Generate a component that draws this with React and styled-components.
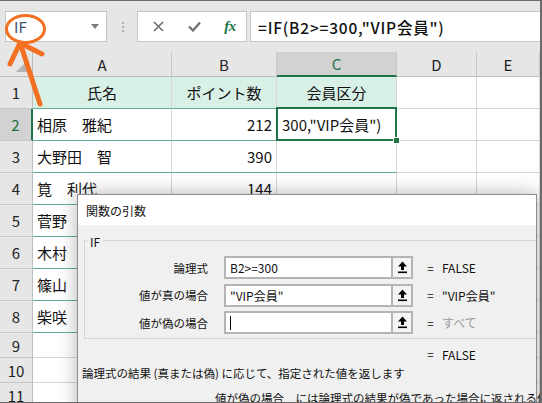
import React from 'react';
import styled, { createGlobalStyle } from 'styled-components';

const FONT = `"Noto Sans CJK JP", "Noto Sans", sans-serif`;
const GREEN = '#217346';
const TABLE_LINE = '#62b08e';
const GRID_LINE = '#d6d6d6';

const GlobalStyle = createGlobalStyle`
  body {
    margin: 0;
    background: #fff;
    font-family: ${FONT};
  }
`;

const Frame = styled.div`
  position: relative;
  width: 542px;
  height: 403px;
  box-sizing: border-box;
  overflow: hidden;
  border-top: 1px solid #6b6b6b;
  border-right: 2px solid #6b6b6b;
  border-bottom: 1px solid #6b6b6b;
  background: #fff;
`;

const Toolbar = styled.div`
  display: flex;
  align-items: center;
  height: 51px;
  padding-left: 5px;
  background: #e6e6e6;
`;

const NameBox = styled.div`
  display: flex;
  align-items: center;
  justify-content: space-between;
  box-sizing: border-box;
  width: 102px;
  height: 31px;
  padding: 0 7px 0 8px;
  background: #fff;
  border: 1px solid #c6c6c6;
  font-size: 15px;
  color: #44546a;
`;

const Caret = styled.span`
  width: 0;
  height: 0;
  border-left: 4px solid transparent;
  border-right: 4px solid transparent;
  border-top: 5px solid #7a7a7a;
`;

const Grip = styled.div`
  display: flex;
  flex-direction: column;
  gap: 2px;
  margin: 0 13px 0 15px;

  span {
    width: 2px;
    height: 2px;
    background: #b0b0b0;
  }
`;

const ButtonBox = styled.div`
  display: flex;
  align-items: center;
  gap: 22px;
  box-sizing: border-box;
  width: 110px;
  height: 31px;
  padding-left: 13px;
  background: #fff;
  border: 1px solid #c6c6c6;
`;

const ToolIcon = styled.span`
  display: flex;
  align-items: center;
  justify-content: center;
  width: 14px;
  height: 14px;
`;

const Fx = styled.span`
  font-family: "Liberation Serif", serif;
  font-style: italic;
  font-weight: bold;
  font-size: 15px;
  color: ${GREEN};
  letter-spacing: -0.5px;
`;

const FormulaBox = styled.div`
  display: flex;
  align-items: center;
  flex: 1;
  box-sizing: border-box;
  height: 31px;
  margin-left: 3px;
  padding-left: 7px;
  background: #fff;
  border: 1px solid #c6c6c6;
  border-right: none;
  font-size: 15.5px;
  font-weight: 500;
  letter-spacing: 0.8px;
  color: #111;
  white-space: nowrap;
`;

const Sheet = styled.div`
  display: grid;
  grid-template-columns: 33px 139px 105px 120px 80px 1fr;
  grid-template-rows: 25px repeat(8, 32px) repeat(3, 25px);
  font-size: 15px;
  color: #111;
`;

const Corner = styled.div`
  display: flex;
  align-items: flex-end;
  justify-content: flex-end;
  padding: 0 4px 4px 0;
  background: #e6e6e6;
  border-right: 1px solid #bdbdbd;
  border-bottom: 1px solid #bdbdbd;

  &::after {
    content: '';
    width: 0;
    height: 0;
    border-left: 12px solid transparent;
    border-bottom: 12px solid #b4b4b4;
  }
`;

const ColHead = styled.div`
  display: flex;
  align-items: center;
  justify-content: center;
  box-sizing: border-box;
  background: ${(p) => (p.$active ? '#d2d2d2' : '#e6e6e6')};
  color: ${(p) => (p.$active ? GREEN : '#222')};
  border-right: 1px solid #c8c8c8;
  border-bottom: ${(p) => (p.$active ? `2px solid ${GREEN}` : '1px solid #bdbdbd')};
`;

const RowHead = styled.div`
  display: flex;
  align-items: center;
  justify-content: center;
  box-sizing: border-box;
  background: ${(p) => (p.$active ? '#d2d2d2' : '#e6e6e6')};
  color: ${(p) => (p.$active ? GREEN : '#222')};
  border-bottom: 1px solid #c8c8c8;
  border-right: ${(p) => (p.$active ? `2px solid ${GREEN}` : '1px solid #bdbdbd')};
`;

const Cell = styled.div`
  position: relative;
  display: flex;
  align-items: center;
  justify-content: ${(p) => p.$align || 'flex-start'};
  box-sizing: border-box;
  padding: 0 4px;
  white-space: nowrap;
  background: ${(p) => (p.$head ? '#d9f0e7' : '#fff')};
  border-right: 1px solid ${GRID_LINE};
  border-bottom: 1px solid ${(p) => (p.$table ? TABLE_LINE : GRID_LINE)};

  ${(p) =>
    p.$selected &&
    `
    z-index: 1;
    padding-left: 5px;
    &::before {
      content: '';
      position: absolute;
      inset: -2px -1px -1px -1px;
      border: 2px solid ${GREEN};
    }
    &::after {
      content: '';
      position: absolute;
      right: -4px;
      bottom: -4px;
      width: 5px;
      height: 5px;
      background: ${GREEN};
      border: 1px solid #fff;
    }
  `}
`;

const Dialog = styled.div`
  position: absolute;
  left: 77px;
  top: 193px;
  width: 460px;
  height: 240px;
  box-sizing: border-box;
  border: 1px solid #8c8c8c;
  background: #f0f0f0;
  box-shadow: 0 0 18px rgba(0, 0, 0, 0.3);
  font-size: 11.5px;
  color: #111;
  z-index: 2;
`;

const TitleBar = styled.div`
  display: flex;
  align-items: center;
  height: 30px;
  padding-left: 8px;
  background: #fff;
  font-size: 12px;
`;

const Body = styled.div`
  padding: 15px 4px 0 4px;
`;

const Group = styled.div`
  position: relative;
  margin: 0 -4px 0 2px;
  padding: 15px 0 4px;
  border: 1px solid #d5d5d5;
  border-right: none;
`;

const Legend = styled.span`
  position: absolute;
  top: -8px;
  left: 2px;
  padding: 0 3px;
  background: #f0f0f0;
  font-size: 12px;
`;

const ArgGrid = styled.div`
  display: grid;
  grid-template-columns: 131px 176px 21px 29px 1fr;
  grid-auto-rows: 23px;
  row-gap: 4.5px;
  align-items: center;
`;

const ArgLabel = styled.span`
  text-align: right;
  padding-right: 8px;
`;

const ArgInput = styled.div`
  display: flex;
  align-items: center;
  box-sizing: border-box;
  height: 23px;
  padding-left: 4px;
  background: #fff;
  border: 2px solid #b4b4b4;
  border-right: 1px solid #b4b4b4;
  margin-left: 8px;
  white-space: nowrap;
  font-size: 12px;
`;

const TextCaret = styled.span`
  display: inline-block;
  width: 1px;
  height: 14px;
  background: #000;
`;

const RefButton = styled.div`
  display: flex;
  align-items: center;
  justify-content: center;
  box-sizing: border-box;
  height: 23px;
  background: #f4f4f4;
  border: 2px solid #b4b4b4;
  border-left: 1px solid #b4b4b4;
`;

const Eq = styled.span`
  text-align: center;
  padding-left: 6px;
`;

const Value = styled.span`
  color: ${(p) => (p.$muted ? '#9a9a9a' : '#111')};
  white-space: nowrap;
  font-size: 12px;
`;

const ResultRow = styled(ArgGrid)`
  margin-top: 7px;
  grid-auto-rows: 16px;
  padding-left: 3px;
`;

const Description = styled.div`
  margin-top: 3px;
  line-height: 16px;
  white-space: nowrap;
`;

const ArgHelp = styled.div`
  margin-top: 9px;
  padding-left: 133px;
  line-height: 16px;
  white-space: nowrap;
`;

const Annotation = styled.svg`
  position: absolute;
  left: 0;
  top: 0;
  z-index: 3;
  overflow: visible;
`;

function CloseIcon() {
  return (
    <svg width="11" height="11" viewBox="0 0 11 11">
      <path d="M1 1 L10 10 M10 1 L1 10" stroke="#6d6d6d" strokeWidth="1.6" />
    </svg>
  );
}

function CheckIcon() {
  return (
    <svg width="13" height="11" viewBox="0 0 13 11">
      <path d="M1 5.5 L5 9.5 L12 1.5" stroke="#6d6d6d" strokeWidth="2.2" fill="none" />
    </svg>
  );
}

function RefIcon() {
  return (
    <svg width="11" height="13" viewBox="0 0 11 13">
      <path d="M5.5 0.5 L10 5.5 H7 V9 H4 V5.5 H1 Z" fill="#000" />
      <rect x="1" y="10.5" width="9" height="1.6" fill="#000" />
    </svg>
  );
}

const COLS = ['A', 'B', 'C', 'D', 'E'];

const ROWS = [
  { n: 1, head: true, table: true, cells: ['氏名', 'ポイント数', '会員区分'] },
  { n: 2, table: true, cells: ['相原　雅紀', '212', '300,"VIP会員")'] },
  { n: 3, table: true, cells: ['大野田　智', '390', ''] },
  { n: 4, table: true, cells: ['筧　利代', '144', ''] },
  { n: 5, table: true, cells: ['菅野', '', ''] },
  { n: 6, table: true, cells: ['木村', '', ''] },
  { n: 7, table: true, cells: ['篠山', '', ''] },
  { n: 8, table: true, cells: ['柴咲', '', ''] },
  { n: 9, cells: [] },
  { n: 10, cells: [] },
  { n: 11, cells: [] },
];

const ARGS = [
  { label: '論理式', input: 'B2>=300', value: 'FALSE' },
  { label: '値が真の場合', input: '"VIP会員"', value: '"VIP会員"' },
  { label: '値が偽の場合', input: null, value: 'すべて', muted: true },
];

function cellAlign(row, col) {
  if (row.head) return 'center';
  if (col === 1) return 'flex-end';
  return 'flex-start';
}

export default function App() {
  return (
    <>
      <GlobalStyle />
      <Frame>
        <Toolbar>
          <NameBox>
            IF
            <Caret />
          </NameBox>
          <Grip>
            <span />
            <span />
            <span />
          </Grip>
          <ButtonBox>
            <ToolIcon>
              <CloseIcon />
            </ToolIcon>
            <ToolIcon>
              <CheckIcon />
            </ToolIcon>
            <ToolIcon>
              <Fx>fx</Fx>
            </ToolIcon>
          </ButtonBox>
          <FormulaBox>=IF(B2&gt;=300,"VIP会員")</FormulaBox>
        </Toolbar>

        <Sheet>
          <Corner />
          {COLS.map((c) => (
            <ColHead key={c} $active={c === 'C'}>
              {c}
            </ColHead>
          ))}
          {ROWS.map((row) => (
            <React.Fragment key={row.n}>
              <RowHead $active={row.n === 2}>{row.n}</RowHead>
              {COLS.map((c, i) => (
                <Cell
                  key={c}
                  $head={row.head && i < 3}
                  $table={row.table && i < 3}
                  $align={cellAlign(row, i)}
                  $selected={row.n === 2 && i === 2}
                >
                  {row.cells[i]}
                </Cell>
              ))}
            </React.Fragment>
          ))}
        </Sheet>

        <Dialog>
          <TitleBar>関数の引数</TitleBar>
          <Body>
            <Group>
              <Legend>IF</Legend>
              <ArgGrid>
                {ARGS.map((a) => (
                  <React.Fragment key={a.label}>
                    <ArgLabel>{a.label}</ArgLabel>
                    <ArgInput>{a.input ?? <TextCaret />}</ArgInput>
                    <RefButton>
                      <RefIcon />
                    </RefButton>
                    <Eq>=</Eq>
                    <Value $muted={a.muted}>{a.value}</Value>
                  </React.Fragment>
                ))}
              </ArgGrid>
            </Group>
            <ResultRow>
              <span />
              <span />
              <span />
              <Eq>=</Eq>
              <Value>FALSE</Value>
            </ResultRow>
            <Description>論理式の結果 (真または偽) に応じて、指定された値を返します</Description>
            <ArgHelp>値が偽の場合　には論理式の結果が偽であった場合に返される値を指定します。</ArgHelp>
          </Body>
        </Dialog>

        <Annotation width="60" height="110" viewBox="0 0 60 110">
          <ellipse cx="25.5" cy="28" rx="19" ry="13.5" fill="none" stroke="#f36f21" strokeWidth="3" />
          <path d="M40 103 L20.5 43" stroke="#f36f21" strokeWidth="5" strokeLinecap="round" />
          <path d="M10 63 L20 42 L42 53" stroke="#f36f21" strokeWidth="5" fill="none" strokeLinecap="round" strokeLinejoin="round" />
        </Annotation>
      </Frame>
    </>
  );
}
